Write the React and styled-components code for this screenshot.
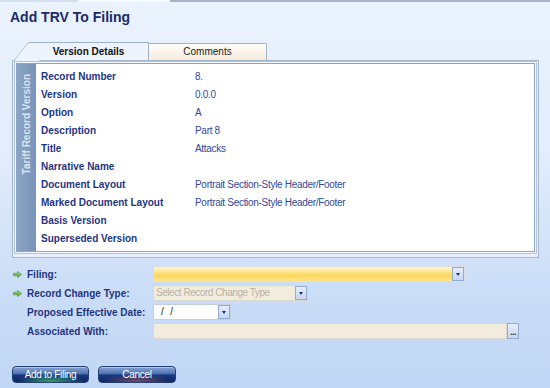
import { Fragment } from 'react';
import styled, { createGlobalStyle } from 'styled-components';

const GlobalStyle = createGlobalStyle`
  html, body { margin: 0; padding: 0; }
  body { font-family: "Liberation Sans", Arial, sans-serif; }
`;

const Page = styled.div`
  width: 550px;
  height: 388px;
  overflow: hidden;
  display: flex;
  flex-direction: column;
  background: linear-gradient(180deg, #eaf2fd 0%, #e2ecfb 40%, #cbddf7 75%, #c1d7f5 100%);
`;

const TopStrip = styled.div`
  display: flex;
  height: 2px;
`;

const StripPart = styled.div`
  width: ${(p) => p.$w};
  flex: ${(p) => (p.$w ? 'none' : 1)};
  background: ${(p) => p.$c};
`;

const Title = styled.h1`
  margin: 7px 0 0 10px;
  font-size: 14px;
  line-height: 16px;
  font-weight: bold;
  color: #1a2a6a;
`;

const TabRow = styled.div`
  display: flex;
  align-items: flex-end;
  height: 18px;
  margin-top: 17px;
  padding-left: 29px;
`;

const ActiveTab = styled.div`
  position: relative;
  z-index: 1;
  box-sizing: border-box;
  width: 120px;
  height: 18px;
  background: #eef4fd;
  border-top: 1px solid #9db1cb;
  border-right: 1px solid #9db1cb;
  font-size: 10px;
  font-weight: bold;
  line-height: 17px;
  text-align: center;
  color: #111;

  &::before {
    content: '';
    position: absolute;
    z-index: -1;
    left: -16px;
    top: -1px;
    width: 26px;
    height: 19px;
    box-sizing: border-box;
    background: #eef4fd;
    border-left: 1px solid #9db1cb;
    border-top: 1px solid #9db1cb;
    border-top-left-radius: 3px;
    transform-origin: bottom left;
    transform: skewX(-38deg);
  }
`;

const Tab = styled.div`
  box-sizing: border-box;
  width: 118px;
  height: 17px;
  background: linear-gradient(180deg, #fffdf9 0%, #f7ebdc 100%);
  border-top: 1px solid #a5b5ca;
  border-right: 1px solid #a5b5ca;
  border-top-right-radius: 2px;
  font-size: 10px;
  line-height: 16px;
  text-align: center;
  color: #1a1a1a;
`;

const Panel = styled.div`
  box-sizing: border-box;
  margin-left: 12px;
  width: 527px;
  height: 198px;
  border: 1px solid #a3b6cf;
  background: #e7f0fc;
  padding: 2px 3px 5px 3px;
`;

const InnerBox = styled.div`
  box-sizing: border-box;
  height: 100%;
  display: flex;
  background: #fff;
  border: 1px solid #8ca5c5;
  box-shadow: 0 0 0 1px #f4f8fe, 0 0 0 2px #b2c3da;
`;

const Sidebar = styled.div`
  width: 19px;
  display: flex;
  flex-direction: column;
  align-items: center;
  padding-top: 10px;
  background: linear-gradient(90deg, #8ba5c5 0%, #7893b8 100%);
`;

const SideLabel = styled.div`
  writing-mode: vertical-rl;
  transform: rotate(180deg);
  font-size: 10px;
  font-weight: bold;
  line-height: 19px;
  color: #dce5f1;
  white-space: nowrap;
`;

const Details = styled.div`
  flex: 1;
  display: grid;
  grid-template-columns: 154px 1fr;
  grid-auto-rows: 18px;
  align-content: start;
  padding: 4px 0 0 5px;
`;

const DetailLabel = styled.div`
  font-size: 10px;
  font-weight: bold;
  line-height: 18px;
  color: #1f3580;
  white-space: nowrap;
`;

const DetailValue = styled.div`
  font-size: 10px;
  line-height: 18px;
  color: #34489a;
  letter-spacing: -0.3px;
  white-space: nowrap;
`;

const Form = styled.div`
  display: flex;
  flex-direction: column;
  gap: 3px;
  margin-top: 8px;
  padding-left: 13px;
`;

const FormRow = styled.div`
  display: flex;
  align-items: center;
  height: 16px;
`;

const LabelCell = styled.div`
  width: 140px;
  display: flex;
  align-items: center;
`;

const Marker = styled.div`
  width: 14px;
  height: 8px;
  display: flex;
  align-items: center;
`;

const FormLabel = styled.span`
  font-size: 10px;
  font-weight: bold;
  color: #1f3580;
  white-space: nowrap;
`;

const Combo = styled.div`
  box-sizing: border-box;
  width: ${(p) => p.$w}px;
  height: 16px;
  display: flex;
  align-items: stretch;
  border: 1px solid ${(p) => p.$border || '#d3d9e2'};
  background: ${(p) => p.$bg};
`;

const FieldText = styled.div`
  flex: 1;
  padding-left: ${(p) => p.$pad || 2}px;
  font-size: 10px;
  line-height: 14px;
  color: ${(p) => p.$color || '#222'};
  letter-spacing: -0.45px;
  white-space: pre;
  overflow: hidden;
`;

const DropBtn = styled.div`
  box-sizing: border-box;
  width: 12px;
  display: flex;
  align-items: center;
  justify-content: center;
  border: 1px solid #93abcd;
  background: linear-gradient(180deg, #e4edfb 0%, #c6d8f3 100%);

  &::after {
    content: '';
    border-left: 2.5px solid transparent;
    border-right: 2.5px solid transparent;
    border-top: 3px solid #1c2f66;
  }
`;

const EllipsisBtn = styled.div`
  box-sizing: border-box;
  width: 12px;
  height: 16px;
  border: 1px solid #93abcd;
  background: linear-gradient(180deg, #e4edfb 0%, #c6d8f3 100%);
  font-size: 9px;
  font-weight: bold;
  line-height: 16px;
  text-align: center;
  color: #1c2f66;
  letter-spacing: -0.5px;
`;

const AssocGroup = styled.div`
  display: flex;
`;

const ButtonRow = styled.div`
  display: flex;
  gap: 9px;
  margin-top: 27px;
  padding-left: 12px;
`;

const ActionButton = styled.button`
  box-sizing: border-box;
  width: ${(p) => p.$w}px;
  height: 17px;
  padding: 0;
  border: 1px solid #263f72;
  border-radius: 4px;
  background:
    radial-gradient(ellipse 45% 55% at 50% 100%, ${(p) => p.$glow} 0%, rgba(0, 0, 0, 0) 100%),
    linear-gradient(180deg, #89a5d6 0%, #4f72b1 45%, #193b80 52%, #0c2663 100%);
  box-shadow: inset 0 1px 0 rgba(255, 255, 255, 0.35);
  font-family: "Liberation Sans", Arial, sans-serif;
  font-size: 10px;
  line-height: 15px;
  color: #fff;
  letter-spacing: -0.3px;
`;

const GreenArrow = () => (
  <svg width="9" height="7" viewBox="0 0 9 7">
    <defs>
      <linearGradient id="ga" x1="0" y1="0" x2="0" y2="1">
        <stop offset="0" stopColor="#a6e07e" />
        <stop offset="1" stopColor="#4f9f2e" />
      </linearGradient>
    </defs>
    <path d="M0.5 2.3H4.6V0.4L8.6 3.5L4.6 6.6V4.7H0.5Z" fill="url(#ga)" stroke="#4a8f30" strokeWidth="0.6" />
  </svg>
);

const details = [
  ['Record Number', '8.'],
  ['Version', '0.0.0'],
  ['Option', 'A'],
  ['Description', 'Part 8'],
  ['Title', 'Attacks'],
  ['Narrative Name', ''],
  ['Document Layout', 'Portrait Section-Style Header/Footer'],
  ['Marked Document Layout', 'Portrait Section-Style Header/Footer'],
  ['Basis Version', ''],
  ['Superseded Version', ''],
];

const yellow = 'linear-gradient(180deg, #fff6cc 0%, #fde68e 35%, #fcd65a 60%, #fde48c 100%)';
const beige = '#f2ecdd';

export default function App() {
  return (
    <>
      <GlobalStyle />
      <Page>
        <TopStrip>
          <StripPart $w="78px" $c="#d5e0ef" />
          <StripPart $w="92px" $c="#f6f9fe" />
          <StripPart $c="#a3b4cc" />
        </TopStrip>
        <Title>Add TRV To Filing</Title>
        <TabRow>
          <ActiveTab>Version Details</ActiveTab>
          <Tab>Comments</Tab>
        </TabRow>
        <Panel>
          <InnerBox>
            <Sidebar>
              <SideLabel>Tariff Record Version</SideLabel>
            </Sidebar>
            <Details>
              {details.map(([label, value]) => (
                <Fragment key={label}>
                  <DetailLabel>{label}</DetailLabel>
                  <DetailValue>{value}</DetailValue>
                </Fragment>
              ))}
            </Details>
          </InnerBox>
        </Panel>
        <Form>
          <FormRow>
            <LabelCell>
              <Marker><GreenArrow /></Marker>
              <FormLabel>Filing:</FormLabel>
            </LabelCell>
            <Combo $w={312} $bg={yellow} $border="#dcdfe4">
              <FieldText />
              <DropBtn />
            </Combo>
          </FormRow>
          <FormRow>
            <LabelCell>
              <Marker><GreenArrow /></Marker>
              <FormLabel>Record Change Type:</FormLabel>
            </LabelCell>
            <Combo $w={155} $bg={beige} $border="#d8d6cf">
              <FieldText $color="#b9b2a4">Select Record Change Type</FieldText>
              <DropBtn />
            </Combo>
          </FormRow>
          <FormRow>
            <LabelCell>
              <Marker />
              <FormLabel>Proposed Effective Date:</FormLabel>
            </LabelCell>
            <Combo $w={78} $bg="#fff" $border="#c3cfe0">
              <FieldText $pad={7}>{'/   /'}</FieldText>
              <DropBtn />
            </Combo>
          </FormRow>
          <FormRow>
            <LabelCell>
              <Marker />
              <FormLabel>Associated With:</FormLabel>
            </LabelCell>
            <AssocGroup>
              <Combo $w={354} $bg={beige} $border="#d8d6cf">
                <FieldText />
              </Combo>
              <EllipsisBtn>...</EllipsisBtn>
            </AssocGroup>
          </FormRow>
        </Form>
        <ButtonRow>
          <ActionButton $w={77} $glow="rgba(70, 200, 100, 0.75)">Add to Filing</ActionButton>
          <ActionButton $w={78} $glow="rgba(200, 90, 90, 0.6)">Cancel</ActionButton>
        </ButtonRow>
      </Page>
    </>
  );
}
